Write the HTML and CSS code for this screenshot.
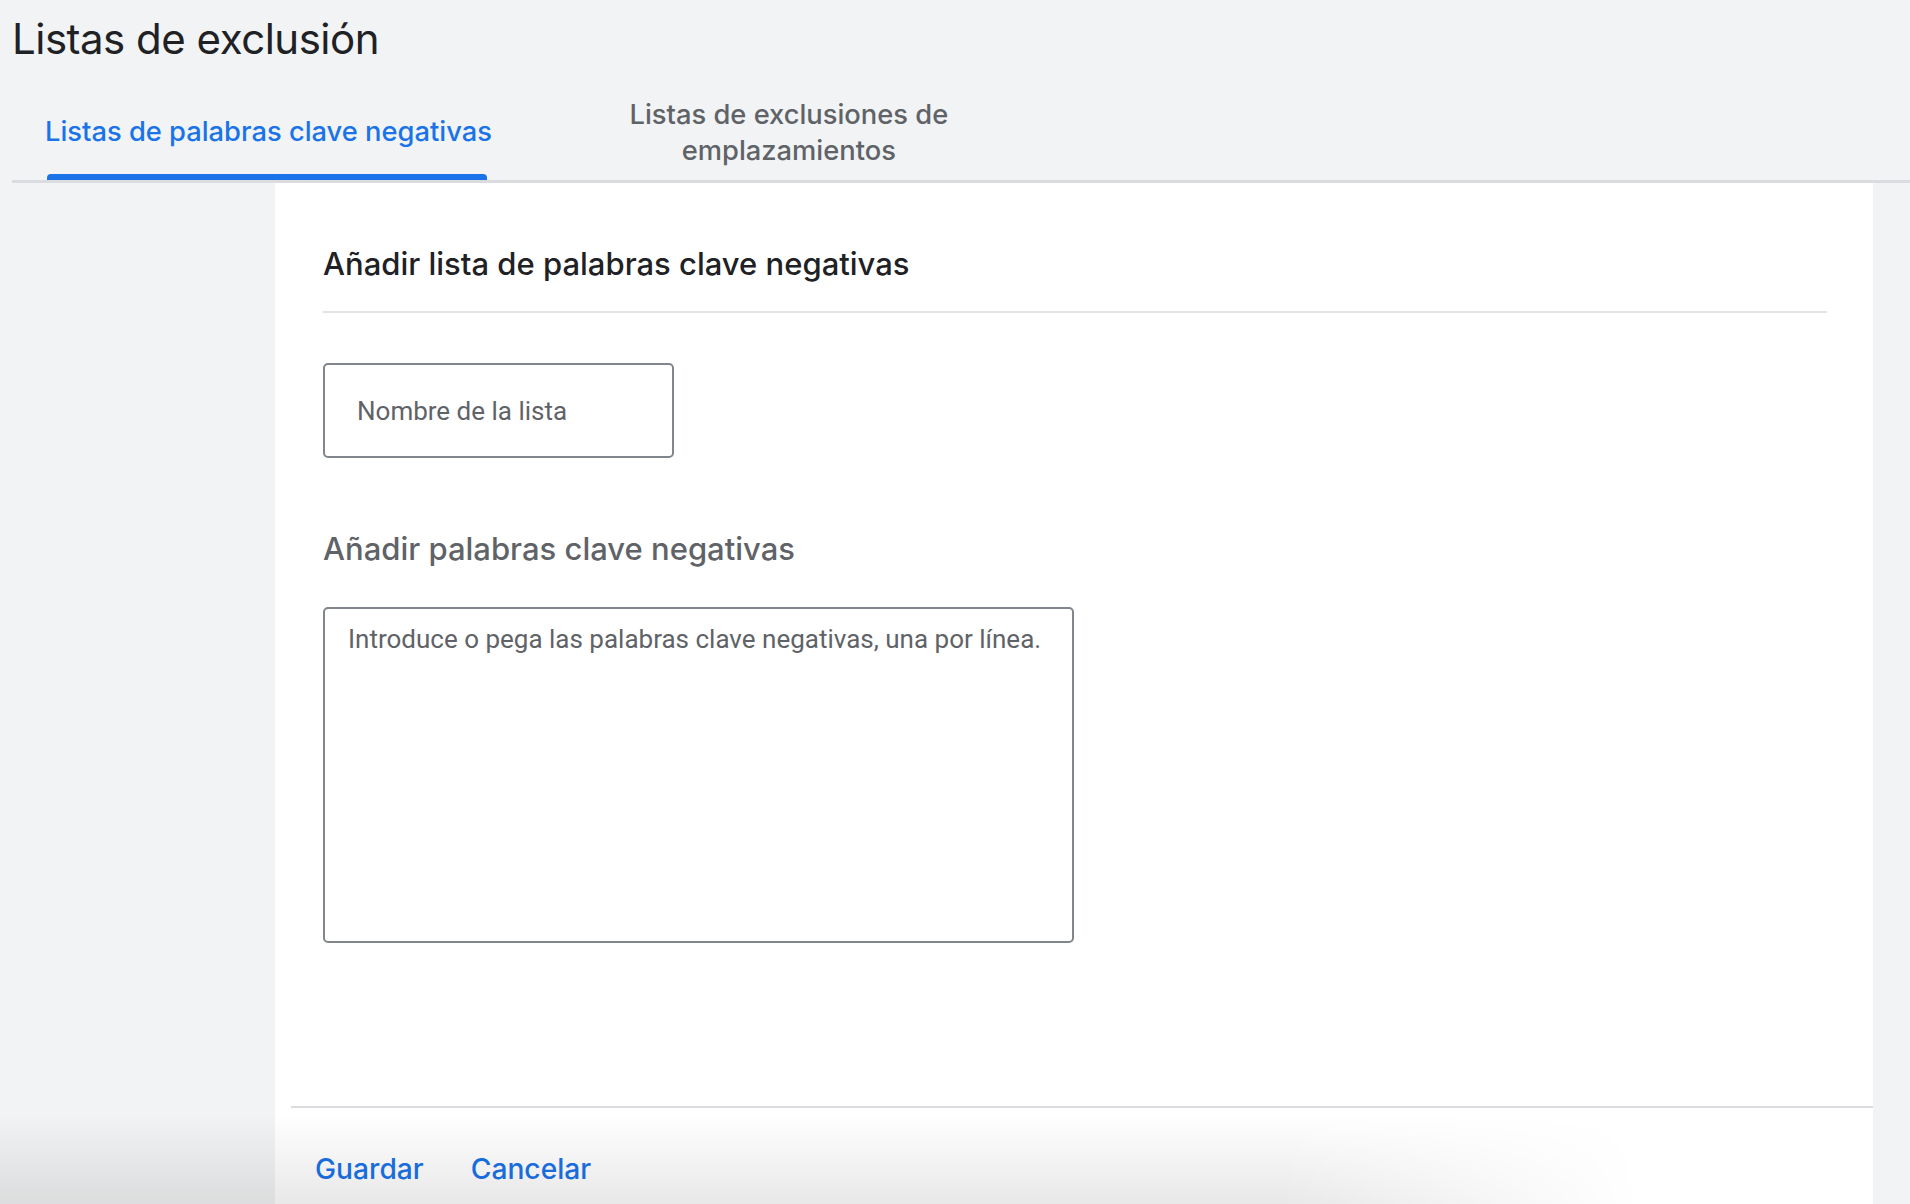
FILE: index.html
```html
<!DOCTYPE html>
<html lang="es">

<head>
  <meta charset="UTF-8" />
  <meta name="viewport" content="width=device-width, initial-scale=1.0" />
  <title>Listas de exclusión</title>
  <link rel="stylesheet" href="styles.css">
</head>

<body>
  <div class="page">
    <header class="page-header">
      <h1>Listas de exclusión</h1>
    </header>

    <nav class="tabs">
      <div class="tab active">Listas de palabras clave negativas</div>
      <div class="tab second">Listas de exclusiones de emplazamientos</div>
    </nav>

    <div class="card">
      <div class="card-head">
        <h2>Añadir lista de palabras clave negativas</h2>
      </div>

      <div class="card-body">
        <input class="field" type="text" placeholder="Nombre de la lista" />

        <h3>Añadir palabras clave negativas</h3>

        <textarea class="keywords" placeholder="Introduce o pega las palabras clave negativas, una por línea."></textarea>
      </div>

      <div class="card-actions">
        <button class="text-btn">Guardar</button>
        <button class="text-btn">Cancelar</button>
      </div>
    </div>
  </div>

  <div class="bottom-shade"></div>
</body>

</html>
```

FILE: styles.css
```css
:root {
  --bg: #f1f3f4;
  --blue: #1a73e8;
  --text: #202124;
  --muted: #5f6368;
  --line: #dadce0;
  --card-bg: #ffffff;
  --heading-font: Inter, 'Open Sans', sans-serif;
}

* {
  margin: 0;
  padding: 0;
  box-sizing: border-box;
}

html,
body {
  height: 100%;
}

body {
  background-color: var(--bg);
  color: var(--text);
  font-family: var(--heading-font);
  overflow: hidden;
}

.page {
  display: flex;
  flex-direction: column;
  height: 100%;
}

.page-header {
  padding: 11px 0 0 12px;
  height: 84px;
}

h1 {
  font-size: 42px;
  font-weight: 400;
  line-height: 56px;
  letter-spacing: -0.5px;
}

.tabs {
  display: flex;
  align-items: center;
  margin-left: 12px;
  padding-left: 33px;
  height: 99px;
  border-bottom: 3px solid var(--line);
}

.tab {
  position: relative;
  font-size: 27.3px;
  font-weight: 500;
  line-height: 36px;
  color: var(--muted);
}

.tab.active {
  color: var(--blue);
  align-self: stretch;
  display: flex;
  align-items: center;
}

.tab.active::after {
  content: "";
  position: absolute;
  left: 2px;
  right: 5px;
  bottom: 0;
  height: 6px;
  border-radius: 4px 4px 0 0;
  background-color: var(--blue);
}

.tab.second {
  width: 460px;
  margin-left: 67px;
  padding: 1px 40px 0;
  text-align: center;
}

.card {
  flex-grow: 1;
  margin-left: 275px;
  width: 1598px;
  background-color: var(--card-bg);
  display: flex;
  flex-direction: column;
}

.card-head {
  margin: 0 46px 0 48px;
  padding-top: 61px;
  height: 130px;
  border-bottom: 2px solid #e3e3e3;
}

h2 {
  font-size: 31px;
  font-weight: 500;
  line-height: 40px;
}

.card-body {
  padding: 50px 0 0 48px;
  display: flex;
  flex-direction: column;
  align-items: flex-start;
  flex-grow: 1;
}

.field,
.keywords {
  font-family: Roboto, 'Noto Sans', sans-serif;
  font-size: 26px;
  color: var(--text);
  border: 2px solid #80868b;
  border-radius: 5px;
  background: transparent;
  outline: none;
}

.field::placeholder,
.keywords::placeholder {
  color: var(--muted);
}

.field {
  width: 351px;
  height: 95px;
  padding: 0 32px;
}

h3 {
  margin-top: 71px;
  font-size: 31px;
  font-weight: 500;
  line-height: 40px;
  color: var(--muted);
}

.keywords {
  margin-top: 38px;
  width: 751px;
  height: 336px;
  padding: 14px 23px;
  line-height: 32px;
  resize: none;
}

.card-actions {
  margin-left: 16px;
  height: 98px;
  border-top: 2px solid var(--line);
  display: flex;
  align-items: center;
  gap: 47px;
  padding: 26px 0 0 24px;
}

.text-btn {
  border: none;
  background: none;
  font-family: var(--heading-font);
  font-size: 28.2px;
  font-weight: 500;
  color: var(--blue);
  cursor: pointer;
}

.bottom-shade {
  position: fixed;
  left: 0;
  bottom: 0;
  width: 1640px;
  height: 90px;
  pointer-events: none;
  background: linear-gradient(to bottom, rgba(0, 0, 0, 0), rgba(0, 0, 0, 0.09));
  -webkit-mask-image: linear-gradient(to right, #000 78%, transparent 100%);
  mask-image: linear-gradient(to right, #000 78%, transparent 100%);
}
```
